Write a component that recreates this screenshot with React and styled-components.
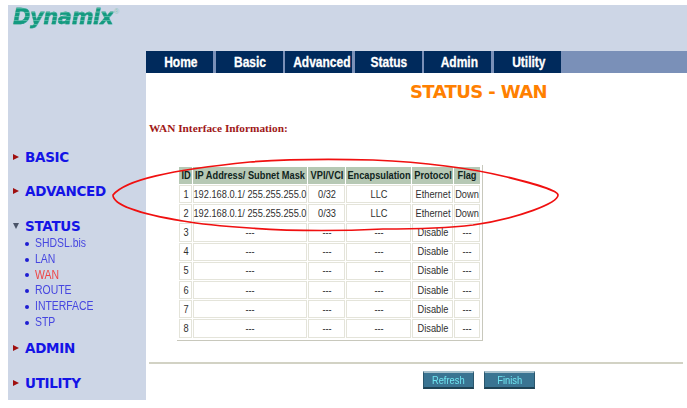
import React from "react";
import styled, { createGlobalStyle } from "styled-components";

const GlobalStyle = createGlobalStyle`
  html, body { margin: 0; padding: 0; background: #fff; }
  body { font-family: "Liberation Sans", Arial, sans-serif; overflow: hidden; }
`;

const Page = styled.div`
  position: relative;
  width: 687px;
  height: 408px;
  padding: 5px 0 0 8px;
  box-sizing: border-box;
  overflow: hidden;
`;
const Frame = styled.div`
  width: 679px;
  height: 395px;
  background: #cdd6e6;
  display: flex;
  flex-direction: column;
`;
const Header = styled.div`
  height: 46px;
  flex: none;
  padding-left: 5px;
`;
const Logo = styled.div`
  font: italic bold 21px/24px "DejaVu Sans", sans-serif;
  letter-spacing: -0.4px;
  -webkit-text-stroke: 0.3px #149a80;
  display: flex;
  align-items: flex-start;
  span {
    background: repeating-linear-gradient(180deg, #149a80 0 3px, #52bca6 3px 4px);
    -webkit-background-clip: text;
    background-clip: text;
    color: transparent;
  }
  sup {
    font: 7px/10px "Liberation Sans", sans-serif;
    -webkit-text-stroke: 0;
    color: #8cc4b8;
    margin: 2px 0 0 1px;
  }
`;
const Body = styled.div`
  flex: 1;
  display: flex;
  min-height: 0;
`;
const Sidebar = styled.div`
  width: 138px;
  flex: none;
  padding: 98px 0 0 5px;
  box-sizing: border-box;
`;
const MenuHead = styled.div`
  display: flex;
  align-items: center;
  height: 16px;
  margin-bottom: ${(p) => p.$gap}px;
  font: bold 13.5px/16px "DejaVu Sans", sans-serif;
  letter-spacing: -0.3px;
  color: #1414e6;
`;
const Arrow = styled.i`
  width: 0;
  height: 0;
  margin-right: 6px;
  border-style: solid;
  ${(p) =>
    p.$open
      ? "border-width: 6px 3px 0 3px; border-color: #4a5468 transparent transparent transparent;"
      : "border-width: 3px 0 3px 6px; border-color: transparent transparent transparent #a01010;"}
`;
const SubList = styled.ul`
  list-style: none;
  margin: 2px 0 9px;
  padding: 0 0 0 12px;
`;
const SubItem = styled.li`
  height: 15.8px;
  font: 12px/15.8px "Liberation Sans", sans-serif;
  color: ${(p) => (p.$active ? "#ee4444" : "#4646e0")};
  display: flex;
  align-items: center;
  &::before {
    content: "";
    width: 4px;
    height: 4px;
    border-radius: 50%;
    background: #1e1ed2;
    margin-right: 6px;
  }
  span {
    display: block;
    transform: scaleX(0.87);
    transform-origin: left center;
  }
`;
const Content = styled.div`
  flex: 1;
  display: flex;
  flex-direction: column;
  min-width: 0;
`;
const Nav = styled.div`
  display: flex;
  height: 22px;
  flex: none;
  background: #7a90b8;
`;
const Tab = styled.div`
  width: 67px;
  margin-right: 2.6px;
  background: #002a5c;
  color: #fff;
  text-align: center;
  font: bold 15px/22px "Liberation Sans", sans-serif;
  -webkit-text-stroke: 0.3px #fff;
  span { display: inline-block; transform: translateX(1px) scaleX(0.8); }
`;
const Main = styled.div`
  flex: 1;
  background: #fff;
  display: flex;
  flex-direction: column;
  padding: 6px 4px 0 3px;
`;
const Title = styled.h1`
  margin: 0 0 0 261px;
  font: bold 18px/26px "DejaVu Sans", sans-serif;
  letter-spacing: -0.6px;
  color: #ff8000;
`;
const Caption = styled.div`
  margin-top: 15px;
  font: bold 11.3px/16px "Liberation Serif", serif;
  color: #a01818;
`;
const Table = styled.table`
  margin: 29px 0 0 28px;
  border-collapse: separate;
  border-spacing: 1px;
  padding: 1px;
  border-right: 1px solid #c8c8bc;
  border-bottom: 1px solid #c8c8bc;
  background: #fff;
  table-layout: fixed;
  width: 303px;
`;
const Th = styled.th`
  height: 17px;
  padding: 0;
  background: #b6c8b4;
  color: #10241c;
  font: bold 11px/1 "Liberation Sans", sans-serif;
  white-space: nowrap;
  text-align: left;
`;
const Td = styled.td`
  height: 16.2px;
  padding: 0;
  border: 1px solid #e4e4da;
  color: #303030;
  font: 11px/1 "Liberation Sans", sans-serif;
  white-space: nowrap;
  text-align: left;
`;
const CellText = styled.span`
  display: block;
  width: max-content;
  margin-left: 50%;
  transform: translateX(-50%) scaleX(0.84);
`;
const Rule = styled.hr`
  margin: 21px 0 0;
  border: 0;
  height: 2px;
  background: #d2d2c4;
`;
const Buttons = styled.div`
  display: flex;
  gap: 10px;
  margin: 7px 0 0 274px;
`;
const Button = styled.button`
  width: 51px;
  height: 18px;
  padding: 0;
  border: 0;
  border-top: 2px solid #a6c0cc;
  border-bottom: 2px solid #1f4254;
  border-left: 1px solid #2a566c;
  border-right: 1px solid #2a566c;
  background: #3a7492;
  color: #6fe6f2;
  font: 11px/14px "Liberation Sans", sans-serif;
  span { display: inline-block; transform: scaleX(0.85); }
`;
const Scribble = styled.svg`
  position: absolute;
  left: 0;
  top: 0;
  pointer-events: none;
`;

const rows = [
  ["1", "192.168.0.1/ 255.255.255.0", "0/32", "LLC", "Ethernet", "Down"],
  ["2", "192.168.0.1/ 255.255.255.0", "0/33", "LLC", "Ethernet", "Down"],
  ...["3", "4", "5", "6", "7", "8"].map((id) => [id, "---", "---", "---", "Disable", "---"]),
];

const App = () => {
  return (
    <Page>
      <GlobalStyle />
      <Frame>
        <Header>
          <Logo><span>Dynamix</span><sup>®</sup></Logo>
        </Header>
        <Body>
          <Sidebar>
            <MenuHead $gap={18}><Arrow />BASIC</MenuHead>
            <MenuHead $gap={19}><Arrow />ADVANCED</MenuHead>
            <MenuHead $gap={0}><Arrow $open />STATUS</MenuHead>
            <SubList>
              {["SHDSL.bis", "LAN", "WAN", "ROUTE", "INTERFACE", "STP"].map((t) => (
                <SubItem key={t} $active={t === "WAN"}><span>{t}</span></SubItem>
              ))}
            </SubList>
            <MenuHead $gap={19}><Arrow />ADMIN</MenuHead>
            <MenuHead $gap={0}><Arrow />UTILITY</MenuHead>
          </Sidebar>
          <Content>
            <Nav>
              {["Home", "Basic", "Advanced", "Status", "Admin", "Utility"].map((t) => (
                <Tab key={t}><span>{t}</span></Tab>
              ))}
            </Nav>
            <Main>
              <Title>STATUS - WAN</Title>
              <Caption>WAN Interface Information:</Caption>
              <Table>
                <colgroup>
                  <col style={{ width: 13 }} />
                  <col style={{ width: 114 }} />
                  <col style={{ width: 37 }} />
                  <col style={{ width: 65 }} />
                  <col style={{ width: 41 }} />
                  <col style={{ width: 26 }} />
                </colgroup>
                <thead>
                  <tr>
                    {["ID", "IP Address/ Subnet Mask", "VPI/VCI", "Encapsulation", "Protocol", "Flag"].map((h) => (
                      <Th key={h}><CellText>{h}</CellText></Th>
                    ))}
                  </tr>
                </thead>
                <tbody>
                  {rows.map((r) => (
                    <tr key={r[0]}>
                      {r.map((c, i) => <Td key={i}><CellText>{c}</CellText></Td>)}
                    </tr>
                  ))}
                </tbody>
              </Table>
              <Rule />
              <Buttons>
                <Button><span>Refresh</span></Button>
                <Button><span>Finish</span></Button>
              </Buttons>
            </Main>
          </Content>
        </Body>
      </Frame>
      <Scribble width="687" height="408" viewBox="0 0 687 408">
        <path
          d="M113 195 C125 180 170 170 250 162 C290 159 340 159 373 160 C420 162 470 168 507 177 C535 184 558 190 558 195 C558 203 520 218 473 225 C440 229 410 229 383 229 C340 231 290 231 250 228 C220 226 200 224 183 221 C140 214 113 205 113 195 Z"
          fill="none"
          stroke="#f01010"
          strokeWidth="1.7"
        />
      </Scribble>
    </Page>
  );
};

export default App;
